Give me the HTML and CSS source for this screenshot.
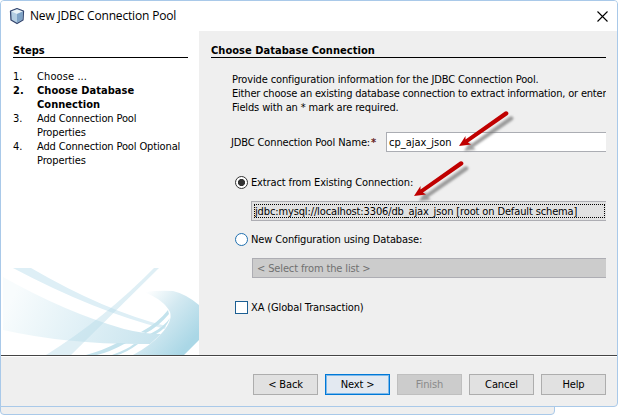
FILE: index.html
```
<!DOCTYPE html>
<html>
  <head>
    <meta charset='UTF-8'>
    <title>New JDBC Connection Pool</title>
    <link rel="stylesheet" href="styles.css">
  </head>
  <body>
    <div class='backdrop'></div>
    <div class='window'>
      <div class='titlebar'>
        <svg class='titlebar__icon' width='16' height='18' viewBox='0 0 16 18'>
          <path d='M8 1.500 L14.500 4 L14 13 L8 16.500 L2 13 L1.500 4 Z' fill='#b4cee2' stroke='#34466e' stroke-width='1.3' stroke-linejoin='round'/>
          <path d='M2.500 4.500 L8 2.500 L13.500 4.500 L8 7 Z' fill='#eaf3f7'/>
          <path d='M8 7 L13.800 4.600 L13.400 12.500 L8 15.800 Z' fill='#7fa3c6'/>
        </svg>
        <div class='titlebar__text'>New JDBC Connection Pool</div>
        <svg class='titlebar__close' width='11' height='11' viewBox='0 0 11 11'>
          <path d='M.5 .5 L10.5 10.5 M10.5 .5 L.5 10.5' stroke='#000' stroke-width='1.1'/>
        </svg>
      </div>
      <div class='content'>
        <div class='steps'>
          <div class='heading'>Steps</div>
          <ol class='steps__list'>
            <li><b class='num'>1.</b><span class='first'>Choose ...</span></li>
            <li class='current'><b class='num'>2.</b><span>Choose Database<br>Connection</span></li>
            <li><b class='num'>3.</b><span>Add Connection Pool<br>Properties</span></li>
            <li><b class='num'>4.</b><span>Add Connection Pool Optional<br>Properties</span></li>
          </ol>
          <svg class='steps__art' width='196' height='87' viewBox='3 268 196 87'>
            <defs>
              <linearGradient id='sweep' x1='0' y1='.6' x2='1' y2='.8'>
                <stop offset='0' stop-color='#f8fcfd'/>
                <stop offset='.5' stop-color='#e0f0f6'/>
                <stop offset='1' stop-color='#c8e4ee'/>
              </linearGradient>
              <linearGradient id='loop' gradientUnits='userSpaceOnUse' x1='146' y1='292' x2='196' y2='336'>
                <stop offset='0' stop-color='#fff'/>
                <stop offset='.45' stop-color='#d3e9f1'/>
                <stop offset='1' stop-color='#aad7e6'/>
              </linearGradient>
            </defs>
            <path d='M3 277 Q65 312 124 329 Q144 334 161 334 L150 344 Q70 345 3 330 Z' fill='url(#sweep)'/>
            <path d='M13 268 H31 Q105 311 166 326 L165 329 Q94 311 13 268 Z' fill='#deeff6'/>
            <path d='M154 268 H159 L71 355 H46 Q105 318 154 268 Z' fill='#b9dce8' fill-opacity='.45'/>
            <path d='M144 292 Q160 290 173 291 Q186 294 199 305 V340 L184 355 H133 Q150 346 161 334 Q173 321 170 312 Q164 300 144 292 Z' fill='url(#loop)'/>
            <path d='M86 355 Q104 350 117 343 H126 Q110 352 97 355 Z M112 355 Q128 349 134 344 H138 Q126 353 117 355 Z' fill='#c4e3ed'/>
            <path d='M141 332 Q158 323 168 310 L169 314 Q158 327 146 333 Z M150 334 Q164 327 170 318 Q166 329 156 334 Z' fill='#c4e3ed'/>
          </svg>
        </div>
        <div class='panel'>
          <div class='heading heading--wide'>Choose Database Connection</div>
          <div class='panel__info'>
            Provide configuration information for the JDBC Connection Pool.<br>
            <span class='long'>Either choose an existing database connection to extract information, or enter</span><br>
            Fields with an * mark are required.
          </div>
          <div class='name'>
            <label class='name__label'>JDBC Connection Pool Name:<i>*</i></label>
            <div class='name__field'>cp_ajax_json</div>
          </div>
          <div class='option option--extract'>
            <div class='radio radio--on'></div>
            <span>Extract from Existing Connection:</span>
          </div>
          <div class='combo'><div class='combo__focus'>jdbc:mysql://localhost:3306/db_ajax_json [root on Default schema]</div></div>
          <div class='option option--new'>
            <div class='radio'></div>
            <span>New Configuration using Database:</span>
          </div>
          <div class='combo combo--disabled'>&lt; Select from the list &gt;</div>
          <div class='option option--xa'>
            <div class='check'></div>
            <span>XA (Global Transaction)</span>
          </div>
        </div>
      </div>
      <div class='buttons'>
        <div class='btn'>&lt; Back</div>
        <div class='btn btn--default'>Next &gt;</div>
        <div class='btn btn--disabled'>Finish</div>
        <div class='btn'>Cancel</div>
        <div class='btn'>Help</div>
      </div>
    </div>
    <svg class='arrows' width='618' height='415' viewBox='0 0 618 415'>
      <defs>
        <filter id='soft' x='-20%' y='-20%' width='140%' height='140%'><feGaussianBlur stdDeviation='1.2'/></filter>
        <path id='arrow' d='M0 0 L6.500 -10 L6.500 -6.500 L46 -34.500 Q48.500 -35.500 49.500 -33 Q49.500 -31.500 48 -30.500 L9 -3.500 L12 -1.500 Z'/>
      </defs>
      <use href='#arrow' x='464' y='151' fill='#777' fill-opacity='.7' filter='url(#soft)'/>
      <use href='#arrow' x='459' y='146' fill='#c00000'/>
      <use href='#arrow' x='419' y='201' fill='#777' fill-opacity='.7' filter='url(#soft)'/>
      <use href='#arrow' x='414' y='196' fill='#c00000'/>
    </svg>
  </body>
</html>
```
FILE: styles.css
```
html, body {
  margin: 0;
  overflow: hidden;
}

body {
  position: relative;
  width: 618px;
  height: 415px;
  background: #fff;
  font: 11px/14px 'DejaVu Sans Condensed', 'DejaVu Sans', sans-serif;
  font-stretch: condensed;
  letter-spacing: -.13px;
  color: #000;
  white-space: nowrap;
  cursor: default;
}

/* edge of the window behind */
.backdrop {
  position: absolute;
  left: 0;
  bottom: 0;
  width: 555px;
  height: 411px;
  box-sizing: border-box;
  border: 1px solid #a9c9e9;
  border-radius: 0 0 4px 4px;
  background: #efefef;
}

.window {
  position: relative;
  display: flex;
  flex-direction: column;
  width: 618px;
  height: 407px;
  box-sizing: border-box;
  border: 1px solid #a9c9e9;
  border-radius: 4px 4px 4px 0;
  background: #efefef;
  overflow: hidden;
}

.titlebar {
  display: flex;
  align-items: center;
  height: 30px;
  padding: 0 9px 0 8px;
  background: #fff;
  font: 12px/18px 'Open Sans', sans-serif;
  font-stretch: normal;
}

.titlebar__text {
  flex: 1;
  margin-left: 5px;
  letter-spacing: -.17px;
}

.content {
  display: flex;
  height: 324px;
  border-bottom: 1px solid #444;
  box-shadow: 0 1px #fff;
}

.steps {
  display: flex;
  flex-direction: column;
  width: 198px;
  background: #fff;
}

.heading {
  margin: 11px 11px 0 12px;
  height: 15px;
  border-bottom: 1px solid #000;
  font-weight: bold;
  letter-spacing: .04px;
  line-height: 18px;
}

.heading--wide {
  margin: 11px 0 0 12px;
}

.steps__list {
  margin: 12px 0 0 12px;
  padding: 0;
  list-style: none;
}

.steps__list li {
  display: flex;
}

.num {
  width: 24px;
  font-weight: inherit;
}

.first {
  letter-spacing: .1px;
}

.current {
  font-weight: bold;
  letter-spacing: .04px;
}

.steps__art {
  margin: auto 0 0 2px;
}

.panel {
  width: 407px;
  overflow: hidden;
}

.panel__info {
  margin: 15px 0 0 33px;
}

.long {
  letter-spacing: -.19px;
}

.name {
  display: flex;
  align-items: center;
  height: 20px;
  margin: 17px 0 0 32px;
}

.name__label {
  width: 155px;
  line-height: 16px;
  padding-top: 2px;
}

.name__label i {
  margin-left: 1px;
  font-style: normal;
  font-weight: bold;
  color: #622;
}

.name__field {
  flex: 1;
  height: 18px;
  border: 1px solid #abadb3;
  border-right: 0;
  padding-left: 2px;
  background: #fff;
  letter-spacing: 0;
  line-height: 20px;
}

.option {
  display: flex;
  align-items: center;
  height: 14px;
  margin-left: 36px;
}

.option span {
  padding-top: 1px;
}

.option--extract {
  margin-top: 23px;
}

.option--new {
  margin-top: 11px;
}

.option--xa {
  margin-top: 22px;
}

.radio {
  width: 11px;
  height: 11px;
  margin-right: 3px;
  border: 1px solid #2070b0;
  border-radius: 50%;
  background: #fff;
}

.radio--on {
  border-color: #333;
  background: radial-gradient(circle, #333 3.2px, #fff 3.9px);
}

.check {
  width: 11px;
  height: 11px;
  margin-right: 3px;
  border: 1px solid #1c5f93;
  background: #fff;
}

.combo {
  height: 18px;
  margin: 12px 0 0 52px;
  border: 1px solid #adadb3;
  border-right: 0;
  background: #e1e1e1;
}

.combo__focus {
  height: 12px;
  margin: 2px 1px 0 2px;
  border: 1px dotted #000;
  line-height: 13px;
}

.combo--disabled {
  margin-left: 53px;
  padding-left: 4px;
  background: #ccc;
  color: #707070;
  line-height: 20px;
}

.buttons {
  display: flex;
  justify-content: flex-end;
  gap: 7px;
  padding: 18px 11px 0 0;
}

.btn {
  width: 63px;
  height: 19px;
  border: 1px solid #adadad;
  background: #e1e1e1;
  line-height: 20px;
  text-align: center;
}

.btn--default {
  border-color: #0078d7;
  box-shadow: inset 0 0 0 1px #7db9ea;
  background: #e3e9f1;
}

.btn--disabled {
  border-color: #bfbfbf;
  background: #ccc;
  color: #8a8a8a;
}

/* red markers drawn over the dialog */
.arrows {
  position: absolute;
  top: 0;
  left: 0;
}
```
